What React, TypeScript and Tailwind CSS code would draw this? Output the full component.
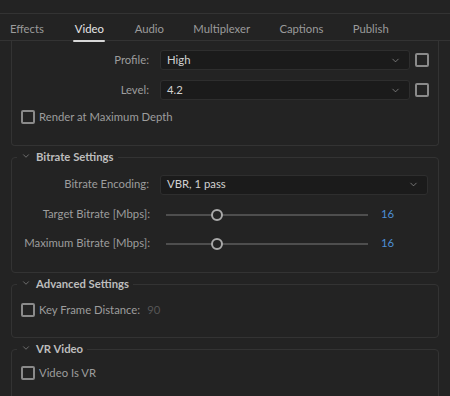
import React from 'react';
import { ChevronDown } from 'lucide-react';

const tabs = ['Effects', 'Video', 'Audio', 'Multiplexer', 'Captions', 'Publish'];

const Checkbox: React.FC = () => (
  <div className="w-[14px] h-[14px] shrink-0 rounded-[2px] border-2 border-[#8a8a8a]" />
);

const Select: React.FC<{ value: string; width: string }> = ({ value, width }) => (
  <div className={`${width} h-[20px] flex items-center justify-between rounded-[3px] border border-[#2e2e2e] bg-[#1b1b1b] pl-[6px] pr-[8px] text-[#d2d2d2]`}>
    <span>{value}</span>
    <ChevronDown size={11} strokeWidth={1.5} className="text-[#9a9a9a]" />
  </div>
);

const Slider: React.FC<{ label: string; value: number; pos: number }> = ({ label, value, pos }) => (
  <div className="flex items-center h-[20px]">
    <div className="w-[138px] text-right text-[#9d9d9d]">{label}</div>
    <div className="ml-[16px] w-[202px] relative h-[12px] flex items-center">
      <div className="w-full h-[2px] bg-[#4e4e4e]" />
      <div
        className="absolute top-0 w-[12px] h-[12px] rounded-full border-2 border-[#a9a9a9] bg-[#232323]"
        style={{ left: pos - 6 }}
      />
    </div>
    <div className="ml-[13px] text-[#4d8fd6]">{value}</div>
  </div>
);

const Section: React.FC<{ title: string; children: React.ReactNode; className?: string }> = ({ title, children, className }) => (
  <fieldset className={`border border-[#333333] rounded-[4px] mx-[11px] ${className ?? ''}`}>
    <legend className="ml-[5px] px-[4px] flex items-center gap-[5px]">
      <ChevronDown size={10} strokeWidth={1.5} className="text-[#9a9a9a] -mt-[3px]" />
      <span className="font-bold text-[#bdbdbd]">{title}</span>
    </legend>
    {children}
  </fieldset>
);

export default function App() {
  return (
    <div className="w-[450px] h-[396px] overflow-hidden bg-[#232323] text-[11.3px] font-['Lato',sans-serif]">
      <div className="h-[14px] border-b border-[#333333]" />
      <div className="h-[27px] flex items-start gap-[29.4px] pl-[10px] pt-[7px] border-b border-[#333333] text-[11.3px]">
        {tabs.map((t) => (
          <div key={t} className="flex flex-col items-center">
            <span className={t === 'Video' ? 'text-[#e6e6e6]' : 'text-[#9b9b9b]'}>{t}</span>
            {t === 'Video' && <div className="w-[32px] h-[2px] mt-[2px] bg-[#d8d8d8] rounded-full" />}
          </div>
        ))}
      </div>

      <div className="mx-[11px] h-[105px] border-x border-b border-[#333333] rounded-b-[4px] pt-[9px]">
        <div className="flex items-center h-[20px]">
          <div className="w-[137px] text-right text-[#9d9d9d]">Profile:</div>
          <div className="ml-[11px]"><Select value="High" width="w-[250px]" /></div>
          <div className="ml-[5px]"><Checkbox /></div>
        </div>
        <div className="flex items-center h-[20px] mt-[10px]">
          <div className="w-[137px] text-right text-[#9d9d9d]">Level:</div>
          <div className="ml-[11px]"><Select value="4.2" width="w-[250px]" /></div>
          <div className="ml-[5px]"><Checkbox /></div>
        </div>
        <div className="flex items-center gap-[4px] pl-[9px] mt-[9px]">
          <Checkbox />
          <span className="text-[#9d9d9d]">Render at Maximum Depth</span>
        </div>
      </div>

      <Section title="Bitrate Settings" className="mt-[3px] h-[124px]">
        <div className="flex items-center h-[20px] mt-[9px]">
          <div className="w-[137px] text-right text-[#9d9d9d]">Bitrate Encoding:</div>
          <div className="ml-[11px]"><Select value="VBR, 1 pass" width="w-[268px]" /></div>
        </div>
        <div className="mt-[10px]">
          <Slider label="Target Bitrate [Mbps]:" value={16} pos={51} />
        </div>
        <div className="mt-[9px]">
          <Slider label="Maximum Bitrate [Mbps]:" value={16} pos={51} />
        </div>
      </Section>

      <Section title="Advanced Settings" className="mt-[3px] h-[62px]">
        <div className="flex items-center gap-[4px] pl-[9px] mt-[9px]">
          <Checkbox />
          <span className="text-[#9d9d9d]">Key Frame Distance:</span>
          <span className="ml-[3px] text-[#555555]">90</span>
        </div>
      </Section>

      <Section title="VR Video" className="mt-[3px] h-[60px]">
        <div className="flex items-center gap-[4px] pl-[9px] mt-[7px]">
          <Checkbox />
          <span className="text-[#9d9d9d]">Video Is VR</span>
        </div>
      </Section>
    </div>
  );
}
